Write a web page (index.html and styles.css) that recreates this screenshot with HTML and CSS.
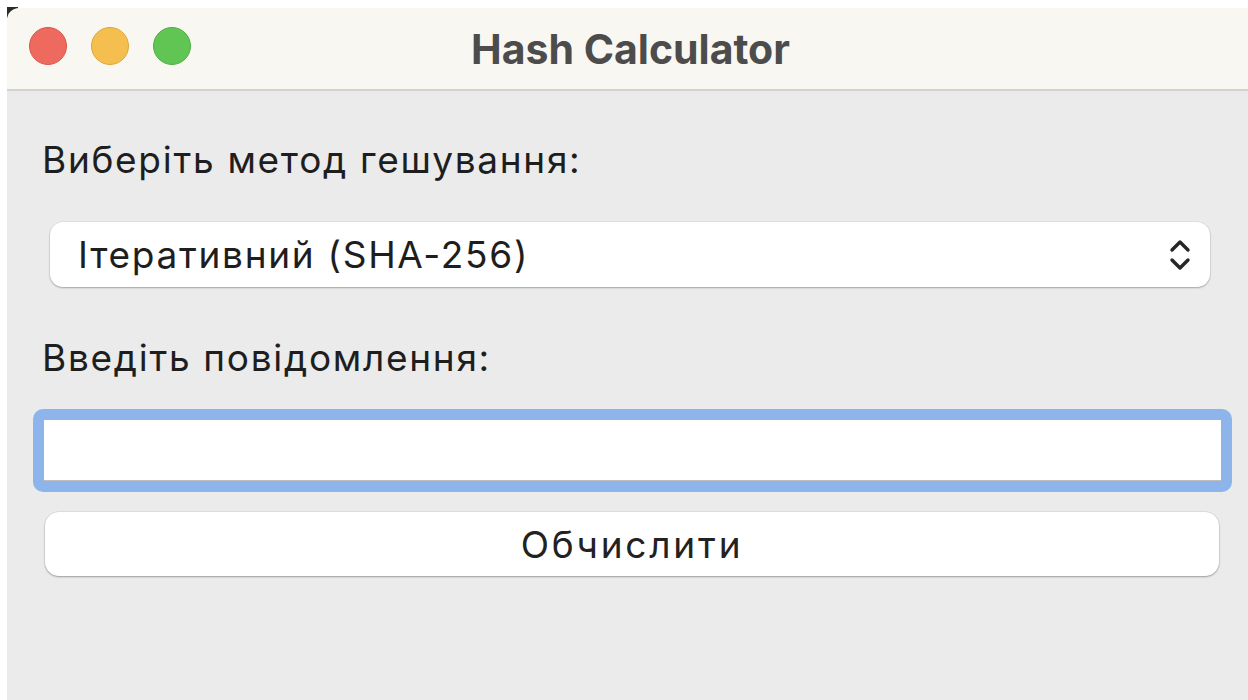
FILE: index.html
```html
<!DOCTYPE html>
<html lang="uk">
<head>
<meta charset="utf-8">
<title>Hash Calculator</title>
<link rel="stylesheet" href="styles.css">
</head>
<body>
<div class="desk">
  <div class="window">
    <header class="titlebar">
      <div class="lights">
        <span class="light red"></span>
        <span class="light yellow"></span>
        <span class="light green"></span>
      </div>
      <h1 class="title">Hash Calculator</h1>
    </header>
    <main class="content">
      <label class="label label-method">Виберіть метод гешування:</label>
      <div class="select">
        <span class="select-text">Ітеративний (SHA-256)</span>
        <svg class="chevrons" width="22" height="34" viewBox="0 0 22 34" aria-hidden="true">
          <path d="M3 12 L11 4 L19 12" fill="none" stroke="#262626" stroke-width="3.4" stroke-linecap="round" stroke-linejoin="round"/>
          <path d="M3 22 L11 30 L19 22" fill="none" stroke="#262626" stroke-width="3.4" stroke-linecap="round" stroke-linejoin="round"/>
        </svg>
      </div>
      <label class="label label-message">Введіть повідомлення:</label>
      <div class="field-ring">
        <input class="field" type="text">
      </div>
      <button class="button" type="button">Обчислити</button>
    </main>
  </div>
</div>
</body>
</html>
```
FILE: styles.css
```css
html, body {
  margin: 0;
  padding: 0;
  background: #ffffff;
}

body {
  font-family: Inter, "Liberation Sans", "Noto Sans", sans-serif;
  width: 1248px;
  height: 700px;
  overflow: hidden;
}

.desk {
  padding: 8px 0 0 7px;
  height: 692px;
}

.window {
  position: relative;
  z-index: 0;
  height: 100%;
  background: #ebebeb;
  border-top-left-radius: 12px;
  display: flex;
  flex-direction: column;
}

/* dark sliver showing behind the rounded corner */
.window::before {
  content: "";
  position: absolute;
  left: 0;
  top: -1px;
  width: 11px;
  height: 11px;
  background: #2b2b2b;
  z-index: -1;
}

.titlebar {
  position: relative;
  height: 81px;
  background: #f9f7f1;
  border-bottom: 2px solid #d3d2cf;
  border-top-left-radius: 12px;
  display: flex;
  align-items: center;
  justify-content: center;
}

.lights {
  position: absolute;
  left: 22px;
  top: 19px;
  display: flex;
  gap: 24px;
}

.light {
  width: 38px;
  height: 38px;
  border-radius: 50%;
  box-sizing: border-box;
}

.red { background: #ee6a5f; border: 1px solid #d9554b; }
.yellow { background: #f5bf4f; border: 1px solid #dea63a; }
.green { background: #61c554; border: 1px solid #4eaf41; }

.title {
  margin: 0 0 0 6px;
  font-size: 41px;
  font-weight: 700;
  color: #4c4c4c;
}

.content {
  display: flex;
  flex-direction: column;
}

.label {
  display: block;
  font-size: 37px;
  letter-spacing: 1.7px;
  color: #1e1e1e;
  margin-left: 35px;
}

.label-method {
  margin-top: 45px;
  line-height: 48px;
}

.select {
  margin: 38px 0 0 43px;
  width: 1160px;
  height: 65px;
  box-sizing: border-box;
  background: #ffffff;
  border-radius: 13px;
  box-shadow: 0 1px 2px rgba(0,0,0,0.28), 0 0 0 0.5px rgba(0,0,0,0.08);
  display: flex;
  align-items: center;
  justify-content: space-between;
  padding: 0 19px 0 28px;
}

.select-text {
  font-size: 37px;
  letter-spacing: 1.7px;
  color: #1e1e1e;
}

.label-message {
  margin-top: 47px;
  line-height: 48px;
}

.field-ring {
  margin: 27px 0 0 26px;
  width: 1199px;
  height: 83px;
  box-sizing: border-box;
  border: 11px solid #8db5ec;
  border-radius: 10px;
  background: #ffffff;
  display: flex;
}

.field {
  flex: 1;
  border: none;
  border-bottom: 1px solid #bdbdbd;
  outline: none;
  background: #ffffff;
  margin: 0;
  padding: 0;
}

.button {
  margin: 20px 0 0 38px;
  width: 1174px;
  height: 64px;
  background: #ffffff;
  border: none;
  border-radius: 14px;
  box-shadow: 0 1px 2px rgba(0,0,0,0.3), 0 0 0 0.5px rgba(0,0,0,0.1);
  font-family: Inter, "Liberation Sans", "Noto Sans", sans-serif;
  font-size: 37px;
  letter-spacing: 2.8px;
  color: #222222;
  padding: 0;
}
```
